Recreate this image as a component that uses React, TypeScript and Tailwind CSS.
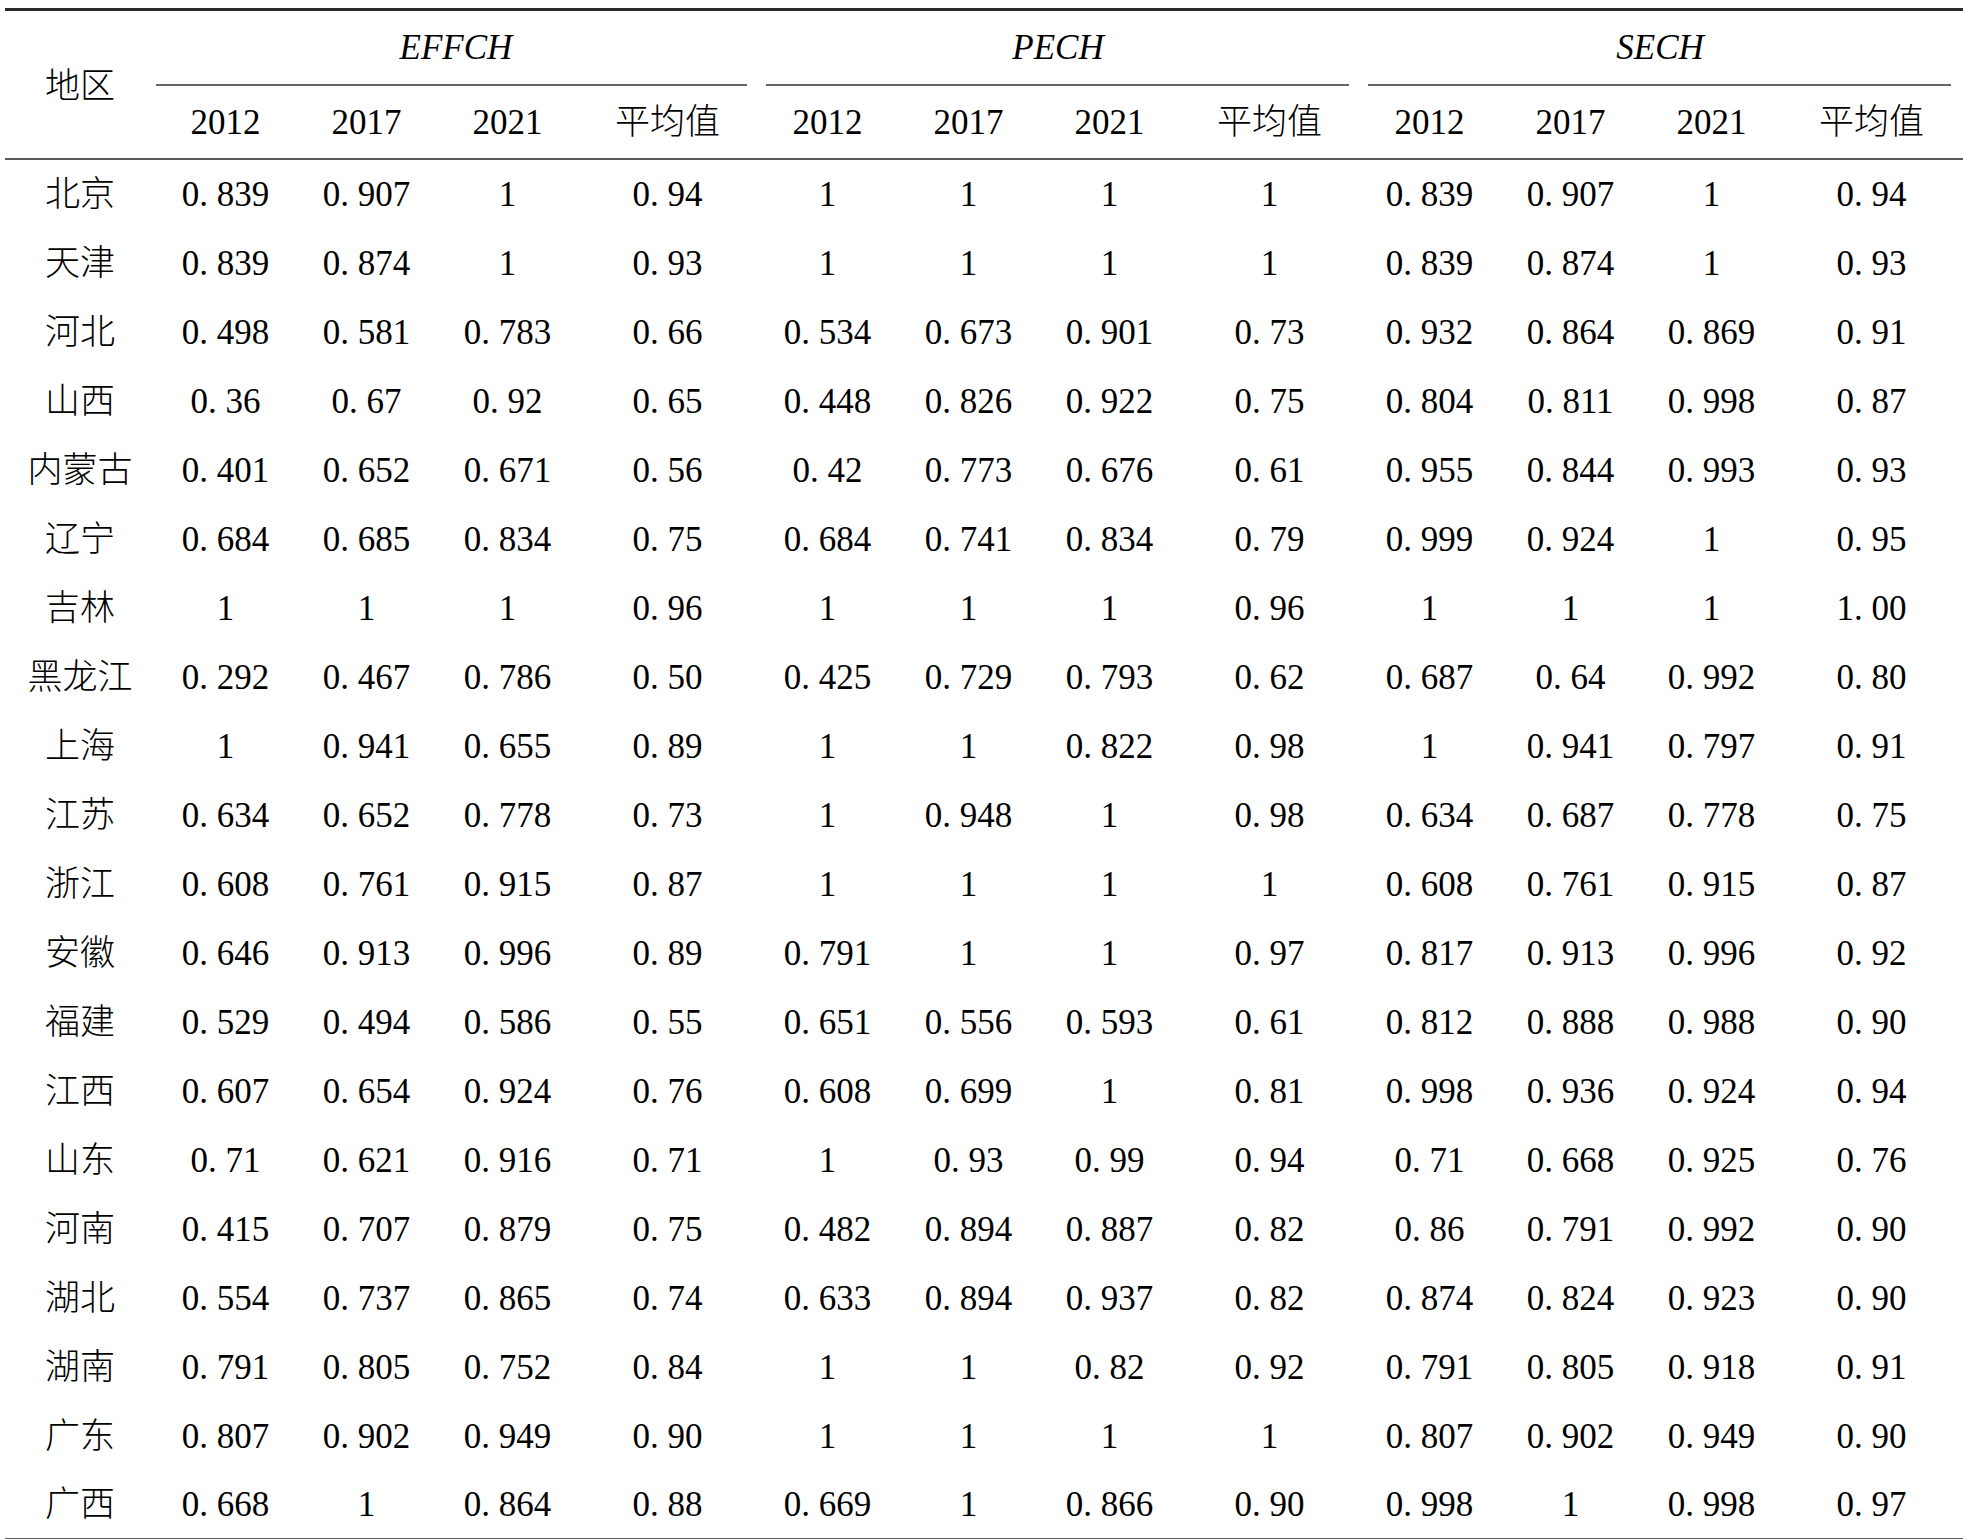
const groups = ['EFFCH', 'PECH', 'SECH'];
const years = ['2012', '2017', '2021', '平均值'];

const rows: [string, string[]][] = [
  ['北京', ['0.839', '0.907', '1', '0.94', '1', '1', '1', '1', '0.839', '0.907', '1', '0.94']],
  ['天津', ['0.839', '0.874', '1', '0.93', '1', '1', '1', '1', '0.839', '0.874', '1', '0.93']],
  ['河北', ['0.498', '0.581', '0.783', '0.66', '0.534', '0.673', '0.901', '0.73', '0.932', '0.864', '0.869', '0.91']],
  ['山西', ['0.36', '0.67', '0.92', '0.65', '0.448', '0.826', '0.922', '0.75', '0.804', '0.811', '0.998', '0.87']],
  ['内蒙古', ['0.401', '0.652', '0.671', '0.56', '0.42', '0.773', '0.676', '0.61', '0.955', '0.844', '0.993', '0.93']],
  ['辽宁', ['0.684', '0.685', '0.834', '0.75', '0.684', '0.741', '0.834', '0.79', '0.999', '0.924', '1', '0.95']],
  ['吉林', ['1', '1', '1', '0.96', '1', '1', '1', '0.96', '1', '1', '1', '1.00']],
  ['黑龙江', ['0.292', '0.467', '0.786', '0.50', '0.425', '0.729', '0.793', '0.62', '0.687', '0.64', '0.992', '0.80']],
  ['上海', ['1', '0.941', '0.655', '0.89', '1', '1', '0.822', '0.98', '1', '0.941', '0.797', '0.91']],
  ['江苏', ['0.634', '0.652', '0.778', '0.73', '1', '0.948', '1', '0.98', '0.634', '0.687', '0.778', '0.75']],
  ['浙江', ['0.608', '0.761', '0.915', '0.87', '1', '1', '1', '1', '0.608', '0.761', '0.915', '0.87']],
  ['安徽', ['0.646', '0.913', '0.996', '0.89', '0.791', '1', '1', '0.97', '0.817', '0.913', '0.996', '0.92']],
  ['福建', ['0.529', '0.494', '0.586', '0.55', '0.651', '0.556', '0.593', '0.61', '0.812', '0.888', '0.988', '0.90']],
  ['江西', ['0.607', '0.654', '0.924', '0.76', '0.608', '0.699', '1', '0.81', '0.998', '0.936', '0.924', '0.94']],
  ['山东', ['0.71', '0.621', '0.916', '0.71', '1', '0.93', '0.99', '0.94', '0.71', '0.668', '0.925', '0.76']],
  ['河南', ['0.415', '0.707', '0.879', '0.75', '0.482', '0.894', '0.887', '0.82', '0.86', '0.791', '0.992', '0.90']],
  ['湖北', ['0.554', '0.737', '0.865', '0.74', '0.633', '0.894', '0.937', '0.82', '0.874', '0.824', '0.923', '0.90']],
  ['湖南', ['0.791', '0.805', '0.752', '0.84', '1', '1', '0.82', '0.92', '0.791', '0.805', '0.918', '0.91']],
  ['广东', ['0.807', '0.902', '0.949', '0.90', '1', '1', '1', '1', '0.807', '0.902', '0.949', '0.90']],
  ['广西', ['0.668', '1', '0.864', '0.88', '0.669', '1', '0.866', '0.90', '0.998', '1', '0.998', '0.97']],
];

// the source typesets decimals with a gap after the point
const fmt = (v: string) => v.replace('.', '. ');

export default function App() {
  return (
    <div className="w-[1963px] h-[1539px] bg-white pt-[8px] pl-[5px] text-black font-['Liberation_Serif','Noto_Sans_CJK_SC',serif] font-light text-[35px] leading-none overflow-hidden">
      <div className="w-[1958px] border-t-[3px] border-b-2 border-t-[#2a2a2a] border-b-[#5a5a5a]">

        {/* Header */}
        <div className="flex h-[149px] border-b-2 border-[#5a5a5a]">
          <div className="w-[150px] flex items-center justify-center pt-[4px]">地区</div>
          {groups.map((g, gi) => (
            <div key={g} className="w-[602px] flex flex-col">
              <div className="h-[73px] flex items-center justify-center italic">{g}</div>
              <div className={`h-[2px] bg-[#666] mr-[10px] ${gi === 0 ? 'ml-[1px]' : 'ml-[9px]'}`} />
              <div className="flex-1 grid grid-cols-[141px_141px_141px_179px]">
                {years.map(y => (
                  <div key={y} className="flex items-center justify-center">{y}</div>
                ))}
              </div>
            </div>
          ))}
        </div>

        {/* Body */}
        {rows.map(([name, vals]) => (
          <div key={name} className="flex h-[69px] last:h-[67px]">
            <div className="w-[150px] flex items-center justify-center">{name}</div>
            <div className="grid grid-cols-[141px_141px_141px_179px_141px_141px_141px_179px_141px_141px_141px_179px]">
              {vals.map((v, i) => (
                <div key={i} className="flex items-center justify-center whitespace-pre">{fmt(v)}</div>
              ))}
            </div>
          </div>
        ))}
      </div>
    </div>
  );
}
